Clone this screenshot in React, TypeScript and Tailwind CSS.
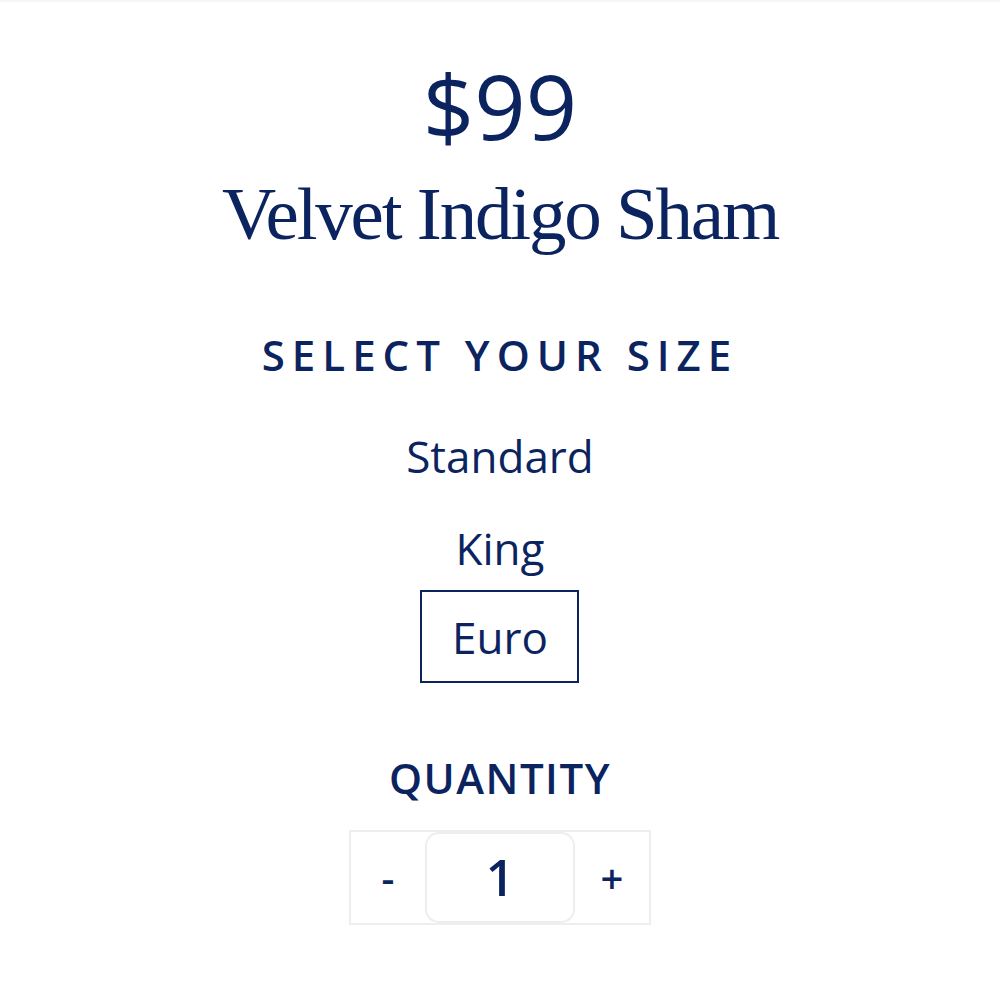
import { useState } from 'react'

const sizes = ['Standard', 'King', 'Euro']

export default function App() {
  const [size, setSize] = useState('Euro')
  const [qty, setQty] = useState(1)

  return (
    <div className="min-h-screen bg-white border-t-2 border-[#f6f6f6] text-[#0b2460] font-['Open_Sans',sans-serif]">
      <div className="flex flex-col items-center pt-[48px]">
        <div className="text-[90px] leading-[110px]">${99}</div>
        <h1 className="mt-[6px] font-['Liberation_Serif',serif] text-[75px] leading-[96px] tracking-[-2.2px]">
          Velvet Indigo Sham
        </h1>

        <h2 className="mt-[65px] text-[42px] leading-[56px] font-semibold tracking-[7px]">SELECT YOUR SIZE</h2>

        <div className="mt-[27px] flex flex-col items-center">
          {sizes.map((s) => (
            <button
              key={s}
              onClick={() => setSize(s)}
              className={
                s === size
                  ? '-mt-[4px] h-[93px] w-[159px] border-2 border-[#0b2460] text-[44px] leading-[56px]'
                  : 'h-[92px] px-4 text-[44px] leading-[56px] border-2 border-transparent'
              }
            >
              {s}
            </button>
          ))}
        </div>

        <h2 className="mt-[67px] text-[42px] leading-[56px] font-semibold tracking-[1.5px]">QUANTITY</h2>

        <div className="mt-[24px] flex items-stretch border-2 border-[#eeeeee] w-[302px] h-[95px]">
          <button onClick={() => setQty(Math.max(1, qty - 1))} className="w-[74px] text-[40px] font-semibold">
            -
          </button>
          <div className="flex-1 flex items-center justify-center border-2 border-[#eeeeee] rounded-[14px] text-[50px] font-semibold">
            {qty}
          </div>
          <button onClick={() => setQty(qty + 1)} className="w-[74px] text-[40px] font-semibold">
            +
          </button>
        </div>
      </div>
    </div>
  )
}
